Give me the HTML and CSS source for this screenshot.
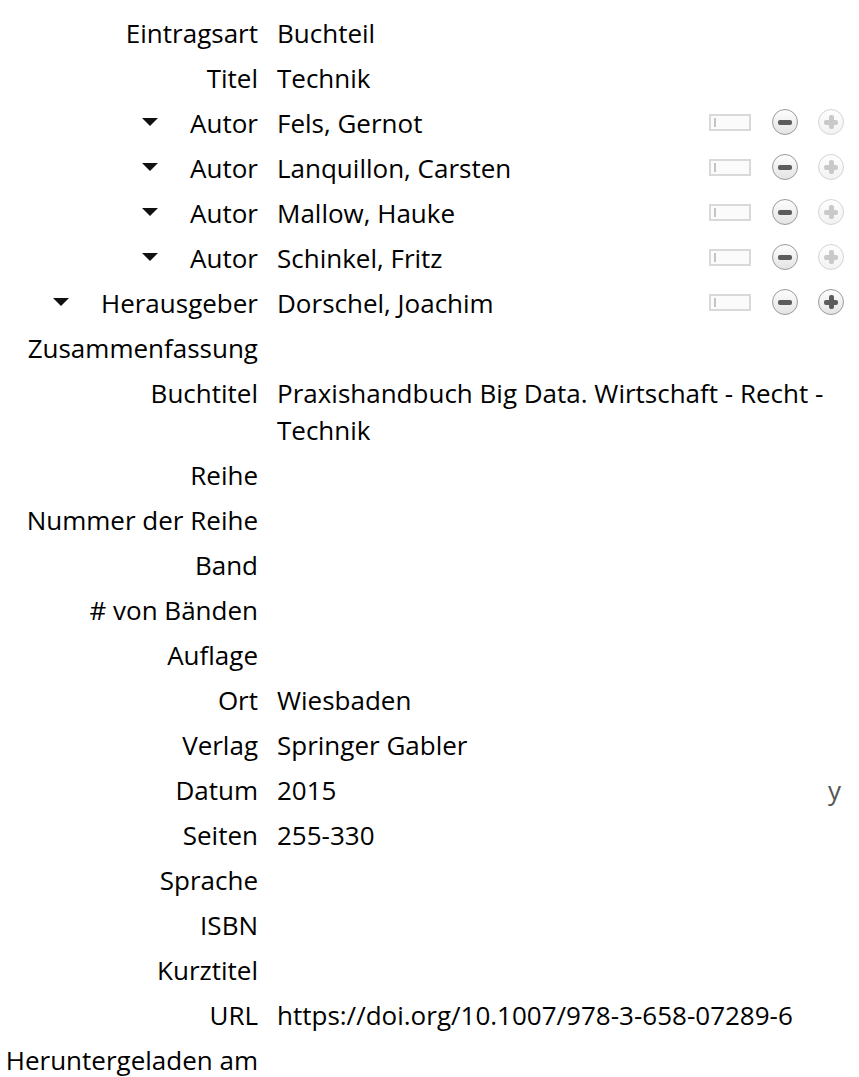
FILE: index.html
```html
<!DOCTYPE html>
<html lang="de">
<head>
<meta charset="utf-8">
<title>Info</title>
<link rel="stylesheet" href="styles.css">
</head>
<body>
<div class="pane">
  <div class="row"><div class="label">Eintragsart</div><div class="value"><span class="text">Buchteil</span></div></div>
  <div class="row"><div class="label">Titel</div><div class="value"><span class="text">Technik</span></div></div>

  <div class="row"><div class="label"><span class="twisty"></span>Autor</div><div class="value"><span class="text">Fels, Gernot</span><span class="tools"><span class="mode"></span><span class="btn minus"></span><span class="btn plus off"></span></span></div></div>
  <div class="row"><div class="label"><span class="twisty"></span>Autor</div><div class="value"><span class="text">Lanquillon, Carsten</span><span class="tools"><span class="mode"></span><span class="btn minus"></span><span class="btn plus off"></span></span></div></div>
  <div class="row"><div class="label"><span class="twisty"></span>Autor</div><div class="value"><span class="text">Mallow, Hauke</span><span class="tools"><span class="mode"></span><span class="btn minus"></span><span class="btn plus off"></span></span></div></div>
  <div class="row"><div class="label"><span class="twisty"></span>Autor</div><div class="value"><span class="text">Schinkel, Fritz</span><span class="tools"><span class="mode"></span><span class="btn minus"></span><span class="btn plus off"></span></span></div></div>
  <div class="row"><div class="label"><span class="twisty"></span>Herausgeber</div><div class="value"><span class="text">Dorschel, Joachim</span><span class="tools"><span class="mode"></span><span class="btn minus"></span><span class="btn plus"></span></span></div></div>

  <div class="row"><div class="label">Zusammenfassung</div><div class="value"></div></div>
  <div class="row"><div class="label">Buchtitel</div><div class="value"><span class="text">Praxishandbuch Big Data. Wirtschaft - Recht - Technik</span></div></div>
  <div class="row"><div class="label">Reihe</div><div class="value"></div></div>
  <div class="row"><div class="label">Nummer der Reihe</div><div class="value"></div></div>
  <div class="row"><div class="label">Band</div><div class="value"></div></div>
  <div class="row"><div class="label"># von Bänden</div><div class="value"></div></div>
  <div class="row"><div class="label">Auflage</div><div class="value"></div></div>
  <div class="row"><div class="label">Ort</div><div class="value"><span class="text">Wiesbaden</span></div></div>
  <div class="row"><div class="label">Verlag</div><div class="value"><span class="text">Springer Gabler</span></div></div>
  <div class="row"><div class="label">Datum</div><div class="value"><span class="text">2015</span><span class="dateflag">y</span></div></div>
  <div class="row"><div class="label">Seiten</div><div class="value"><span class="text">255-330</span></div></div>
  <div class="row"><div class="label">Sprache</div><div class="value"></div></div>
  <div class="row"><div class="label">ISBN</div><div class="value"></div></div>
  <div class="row"><div class="label">Kurztitel</div><div class="value"></div></div>
  <div class="row"><div class="label">URL</div><div class="value"><span class="text">https://doi.org/10.1007/978-3-658-07289-6</span></div></div>
  <div class="row"><div class="label">Heruntergeladen am</div><div class="value"></div></div>
</div>
</body>
</html>
```

FILE: styles.css
```css
html, body {
  margin: 0;
  padding: 0;
  background: #ffffff;
}

body {
  font-family: "Open Sans", "Noto Sans", "DejaVu Sans", sans-serif;
  font-size: 26px;
  line-height: 37px;
  color: #000000;
}

.pane {
  padding: 11px 15px 0 0;
  display: flex;
  flex-direction: column;
}

.row {
  display: grid;
  grid-template-columns: 258px 1fr;
  column-gap: 19px;
  padding: 4px 0;
  min-height: 37px;
}

.label {
  display: flex;
  justify-content: flex-end;
  align-items: flex-start;
  gap: 32px;
  white-space: nowrap;
  height: 37px;
}

.twisty {
  width: 0;
  height: 0;
  border-left: 8px solid transparent;
  border-right: 8px solid transparent;
  border-top: 8px solid #111111;
  margin-top: 13px;
}

.value {
  display: flex;
  align-items: center;
  min-width: 0;
}

.text {
  flex: 1;
  min-width: 0;
}

.tools {
  display: flex;
  align-items: center;
  gap: 20px;
  margin-top: -3px;
}

.mode {
  width: 38px;
  height: 13px;
  border: 2px solid #d9d9d9;
  background: #fbfbfb;
  position: relative;
  margin-right: 1px;
}

.mode::before {
  content: "";
  position: absolute;
  left: 3px;
  top: 2px;
  width: 2px;
  height: 9px;
  background: #c4c4c4;
}

.btn {
  width: 24px;
  height: 24px;
  border-radius: 50%;
  border: 1px solid #9a9a9a;
  background: linear-gradient(#fdfdfd, #e4e4e4);
  position: relative;
  box-sizing: content-box;
}

.btn::before,
.btn::after {
  content: "";
  position: absolute;
  background: #5c5c5c;
  border-radius: 2px;
}

.btn::before {
  left: 5px;
  top: 10px;
  width: 14px;
  height: 5px;
}

.plus::after {
  left: 10px;
  top: 5px;
  width: 5px;
  height: 14px;
}

.btn.off {
  border-color: #d4d4d4;
  background: linear-gradient(#fefefe, #f2f2f2);
}

.btn.off::before,
.btn.off::after {
  background: #c9c9c9;
}

.dateflag {
  color: #555555;
  margin-right: 3px;
}
```
